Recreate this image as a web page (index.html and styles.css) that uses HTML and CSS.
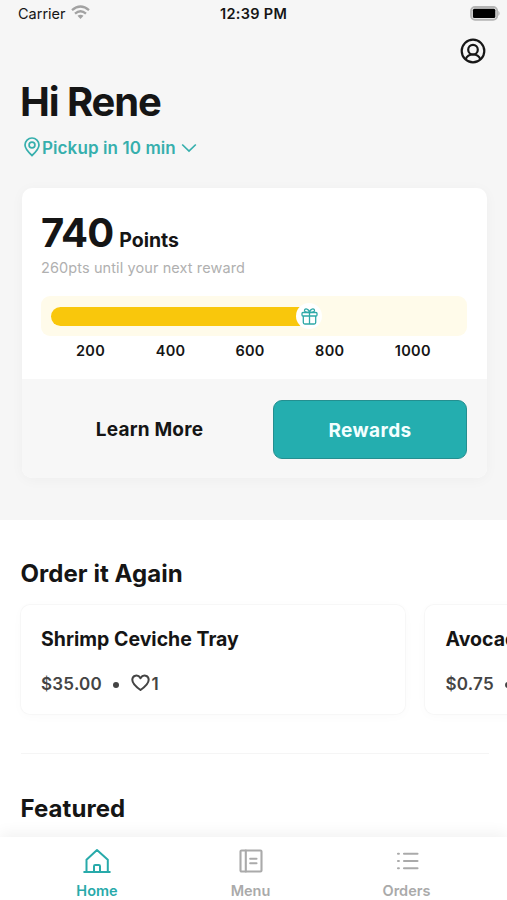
FILE: index.html
```html
<!DOCTYPE html>
<html lang="en">
<head>
<meta charset="utf-8">
<title>Home</title>
<link rel="stylesheet" href="styles.css">
</head>
<body>
<div class="app">
  <section class="hero">
    <div class="status">
      <div class="carrier"><span>Carrier</span>
        <svg width="19" height="15" viewBox="0 0 19 15" fill="none" stroke="#a2a2a2" stroke-width="2.3"><path d="M1 5.2Q9.5-2.2 18 5.2M4 8.7Q9.5 3.9 15 8.7"/><path d="M6.5 10.8Q9.5 8.5 12.5 10.8L9.5 14Z" fill="#a2a2a2" stroke="none"/></svg>
      </div>
      <span class="clock">12:39 PM</span>
      <svg class="battery" width="31" height="15" viewBox="0 0 31 15"><rect x="1" y="1" width="26.2" height="12.8" rx="4" fill="#e4e4e4" stroke="#b4b4b4" stroke-width="1.8"/><path d="M28.3 4.8Q31 7.4 28.3 10Z" fill="#b4b4b4"/><rect x="2.9" y="2.7" width="22.4" height="9.4" rx="1.5" fill="#000"/></svg>
    </div>
    <div class="profile">
      <svg width="26" height="26" viewBox="0 0 26 26" fill="none" stroke="#171717" stroke-width="2.2"><circle cx="13" cy="13" r="11.3"/><circle cx="13" cy="11.7" r="4.8"/><path d="M5.6 21.2C7 17.9 9.8 16.5 13 16.5s6 1.4 7.4 4.7"/></svg>
    </div>
    <h1 class="greeting">Hi Rene</h1>
    <div class="pickup">
      <svg width="16" height="20" viewBox="0 0 16 20" fill="none" stroke="#36afad" stroke-width="1.7"><path d="M8 18.5C4.7 15.5 1 11.8 1 8a7 7 0 0 1 14 0c0 3.8-3.7 7.5-7 10.5Z"/><circle cx="8" cy="8" r="2.9"/></svg>
      <span>Pickup in 10 min</span>
      <svg class="chevron" width="16" height="10" viewBox="0 0 16 10" fill="none" stroke="#36afad" stroke-width="1.7"><path d="M1.2 1.5 8 8l6.8-6.5"/></svg>
    </div>
    <div class="rewards">
      <div class="summary">
        <div class="points"><span class="value">740</span><span class="unit">Points</span></div>
        <p class="until">260pts until your next reward</p>
        <div class="track">
          <div class="bar"></div>
          <div class="gift">
            <svg width="17" height="17" viewBox="0 0 17 17" fill="none" stroke="#2fa9a8" stroke-width="1.3"><rect x="1" y="4.5" width="15" height="3.5" rx="1"/><path d="M2.3 8v6.5q0 1.5 1.5 1.5h9.4q1.5 0 1.5-1.5V8M8.5 4.5V16M8.5 4.5C4.8 4.5 3.3 3.6 3.5 2.3 3.7.3 7.8.2 8.5 4.5ZM8.5 4.5c3.7 0 5.2-.9 5-2.2C13.3.3 9.2.2 8.5 4.5Z"/></svg>
          </div>
        </div>
        <div class="scale"><span>200</span><span>400</span><span>600</span><span>800</span><span>1000</span></div>
      </div>
      <div class="actions">
        <a class="learn">Learn More</a>
        <a class="button">Rewards</a>
      </div>
    </div>
  </section>
  <main class="content">
    <h2 class="title">Order it Again</h2>
    <div class="items">
      <article class="item">
        <h3>Shrimp Ceviche Tray</h3>
        <div class="meta"><span class="price">$35.00</span><i class="dot"></i>
          <svg width="19" height="18" viewBox="0 0 19 18" fill="none" stroke="#444" stroke-width="2" stroke-linejoin="round"><path d="M9.5 16C5.500 13.200 1.300 9.800 1.300 5.800c0-4.700 5.700-5.700 8.200-1.700 2.500-4 8.200-3 8.200 1.700 0 4-4.200 7.400-8.200 10.200Z"/></svg>
          <span class="likes">1</span></div>
      </article>
      <article class="item">
        <h3>Avocado</h3>
        <div class="meta"><span class="price">$0.75</span><i class="dot"></i></div>
      </article>
    </div>
    <hr class="rule">
    <h2 class="title">Featured</h2>
  </main>
  <nav class="tabs">
    <a class="tab active">
      <svg width="28" height="26" viewBox="0 0 28 26" fill="none" stroke="currentColor" stroke-width="2" stroke-linecap="round" stroke-linejoin="round"><path d="M1.2 24h25.6M3.5 24V11.8L14 2l10.800 9.800V24M11 24v-5.800q0-1.200 1.200-1.200h3.600q1.200 0 1.200 1.200V24"/></svg>
      <span>Home</span>
    </a>
    <a class="tab">
      <svg width="28" height="26" viewBox="0 0 28 26" fill="none" stroke="currentColor" stroke-width="2.1" stroke-linecap="round"><rect x="3.5" y="2.5" width="21" height="21" rx="1"/><path d="M8.800 2.500v21M13.200 10.700h6.300M13.200 15.200h6.300"/></svg>
      <span>Menu</span>
    </a>
    <a class="tab">
      <svg width="28" height="26" viewBox="0 0 28 26" fill="none" stroke="currentColor" stroke-width="2.1" stroke-linecap="round"><path d="M5 5.700h.9M11 5.700h13.500M5 13h.9M11 13h13.500M5 20.300h.9M11 20.300h13.500"/></svg>
      <span>Orders</span>
    </a>
  </nav>
</div>
</body>
</html>
```
FILE: styles.css
```css
* { box-sizing: border-box; }
body { margin: 0; font-family: Inter, "Liberation Sans", sans-serif; color: #151515; background: #fff; }
h1, h2, h3, p { margin: 0; font-weight: 700; }
svg { display: block; flex: none; }
.app { width: 507px; height: 900px; overflow: hidden; display: flex; flex-direction: column; }
.hero { height: 520px; flex: none; background: #f6f6f6; padding: 0 20px 0 22px; }
.status { height: 27px; display: grid; grid-template-columns: 201px auto 1fr; align-items: center; margin: 0 -12px 0 -3px; font-size: 14.5px; }
.carrier { display: flex; align-items: center; gap: 5px; margin-left: -1px; }
.carrier svg { margin-top: -2px; }
.clock { font-weight: 600; letter-spacing: .3px; }
.battery { justify-self: end; margin-right: -2px; }
.profile { height: 48px; display: flex; justify-content: flex-end; padding: 11px 1px 0; }
.greeting { font-size: 40px; line-height: 53px; height: 52px; letter-spacing: -1.1px; margin-left: -2px; }
.pickup { display: flex; align-items: center; height: 40px; color: #36afad; font-size: 17px; font-weight: 600; padding-left: 2px; gap: 2px; letter-spacing: .1px; }
.pickup span { padding-top: 1px; }
.chevron { margin: 2px 0 0 3px; }
.rewards { margin-top: 21px; width: 465px; height: 290px; border-radius: 10px; background: #fff; overflow: hidden; box-shadow: 0 2px 14px rgba(0,0,0,.035); }
.summary { height: 191px; padding: 20px 20px 0; }
.points { display: flex; align-items: baseline; gap: 6px; height: 48px; line-height: 49px; margin-left: -1px; }
.value { font-size: 40px; font-weight: 700; letter-spacing: -.9px; }
.unit { font-size: 19.5px; font-weight: 700; }
.until { font-size: 14.5px; font-weight: 400; line-height: 23px; height: 22px; color: #b0b0b0; letter-spacing: .1px; margin-left: -1px; }
.track { height: 40px; margin-top: 18px; margin-left: -1px; border-radius: 9px; background: #fffbea; display: flex; align-items: center; padding-left: 10px; }
.bar { width: 252px; height: 19px; background: #f9c70c; border-radius: 10px 0 0 10px; }
.gift { width: 26px; height: 26px; border-radius: 50%; background: #fff; margin-left: -7px; display: grid; place-items: center; }
.scale { display: grid; grid-template-columns: repeat(4, 79.7px) auto; padding-left: 34px; font-size: 14.5px; font-weight: 600; line-height: 30px; letter-spacing: .3px; }
.actions { height: 99px; background: #f7f7f7; display: grid; grid-template-columns: 1fr 194px; align-items: center; gap: 16px; padding: 2px 20px 0 20px; font-size: 19px; font-weight: 700; }
.learn { text-align: center; letter-spacing: .2px; }
.button { height: 59px; display: grid; place-items: center; color: #f3ffff; background: #24aeaf; border: 1px solid #248f90; border-radius: 9px; padding-top: 1px; letter-spacing: .4px; }
.content { flex: 1; min-height: 0; padding: 38px 18px 0 20.5px; }
.title { font-size: 24px; line-height: 32px; letter-spacing: .06px; }
.items { display: flex; gap: 20px; margin-top: 15px; }
.item { flex: none; width: 384.5px; height: 109px; padding: 20px 20px 0 20.5px; border-radius: 9px; background: #fff; box-shadow: 0 0 0 1px #f7f7f7, 0 2px 12px rgba(0,0,0,.025); }
.item h3 { font-size: 19.5px; line-height: 29px; }
.meta { display: flex; align-items: center; height: 24px; margin-top: 17px; font-size: 17px; font-weight: 600; color: #444; letter-spacing: .25px; }
.price, .likes { padding-top: 1px; }
.dot { width: 6px; height: 6px; border-radius: 50%; background: #444; margin: 3px 11.5px 0 11px; flex: none; }
.likes { margin-left: 2px; }
.rule { border: 0; height: 1px; background: #f5f5f5; margin: 39px 0; }
.tabs { position: relative; height: 63px; flex: none; background: #fff; box-shadow: 0 -4px 14px rgba(0,0,0,.055); display: grid; grid-template-columns: 156px 151px 161px; padding: 11px 0 0 19px; color: #aaa; }
.tab { display: flex; flex-direction: column; align-items: center; gap: 8px; font-size: 14.5px; line-height: 18px; font-weight: 600; }
.active { color: #28aaaa; }
```
